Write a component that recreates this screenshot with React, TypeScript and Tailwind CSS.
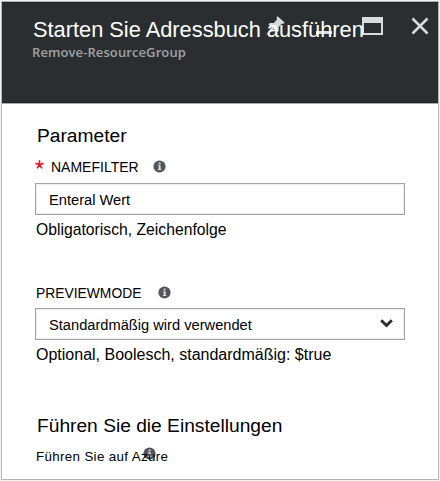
import type { ReactNode } from "react";

function InfoIcon({ className = "" }: { className?: string }) {
  return (
    <svg className={`block h-[13px] w-[13px] shrink-0 ${className}`} viewBox="0 0 13 13">
      <circle cx="6.5" cy="6.5" r="6.1" fill="#53575b" />
      <rect x="5.7" y="2.6" width="1.9" height="1.7" fill="#e0e0e0" />
      <path d="M4.9 5.2h2.7v3.9h.7v.9H4.9v-.9h.8v-3h-.8z" fill="#e0e0e0" />
    </svg>
  );
}

function Field({ children, arrow = false }: { children: ReactNode; arrow?: boolean }) {
  return (
    <div className="flex h-8 w-[370px] items-center justify-between border border-[#a3a3a3] pt-[2px] pr-[11px] pl-[13px] text-[14.67px] leading-5 shadow-[inset_0_0_0_1px_#eeeeee]">
      <span>{children}</span>
      {arrow && (
        <svg className="-mt-[3px] block h-[9px] w-[13px]" viewBox="0 0 13 9">
          <path d="M1.2 1.3 6.5 6.5l5.3-5.2" fill="none" stroke="#252b33" strokeWidth="2.9" />
        </svg>
      )}
    </div>
  );
}

function WindowControls() {
  return (
    <div className="absolute top-[14px] right-[8px] flex h-[21px] items-start">
      <svg className="-mt-px block h-[20px] w-[20px]" viewBox="0 0 20 20" fill="#dadbdc">
        <path d="m12.5.3 7.2 6.2-1.5 1.3h-1.6L13.7 11v4L12 16.3 8.6 13.2 1 19.5l5.6-8.4-3.2-2.6 1.4-1.4h4.1l3-3.6-.3-2z" />
      </svg>
      <div className="mt-[14px] ml-[31px] h-[3px] w-[16px] bg-[#dadbdc]" />
      <div className="ml-[30px] h-[18px] w-[21px] border-[2px] border-t-[6px] border-[#dadbdc]" />
      <svg className="ml-[28px] mr-px block h-[18px] w-[18px]" viewBox="0 0 18 18">
        <path d="m1.5 1.5 15 15M16.5 1.5l-15 15" stroke="#dadbdc" strokeWidth="2.5" />
      </svg>
    </div>
  );
}

export default function App() {
  return (
    <div className="h-[481px] w-[440px] bg-[#f2f2f2] p-px font-['Liberation_Sans',Arial,sans-serif] text-black">
      <main className="flex h-[479px] w-[438px] flex-col border border-[#b5b5b5] bg-white">
        <header className="relative h-[101px] shrink-0 border-y border-t-[#1c2226] border-b-[#1c2226] bg-[#2a2e31] pt-[15px] pl-[31px] shadow-[0_1px_0_#aaaaaa]">
          <WindowControls />
          <h1 className="relative h-6 text-[21.8px] leading-6 whitespace-nowrap text-white">
            Starten Sie Adressbuch ausführen
          </h1>
          <p className="-ml-px h-5 font-['Open_Sans','Noto_Sans',sans-serif] text-[13px] leading-5 font-semibold tracking-[0.1px] whitespace-nowrap text-[#a0a3a5]">
            Remove-ResourceGroup
          </p>
        </header>
        <section className="pl-[33px]">
          <h2 className="mt-[21px] ml-[2px] h-6 text-[19.2px] leading-6">Parameter</h2>
          <div className="mt-[9px] flex h-5 items-center text-[14px] leading-5">
            <svg className="-mt-[6px] block h-[9px] w-[9px]" viewBox="0 0 9 9">
              <path d="M4.5 4.8V.2M4.5 4.8.5 3.2M4.5 4.8l4-1.6M4.5 4.8 2 8.4M4.5 4.8 7 8.4" stroke="#e81123" strokeWidth="1.6" />
            </svg>
            <span className="ml-[7px] w-[102px]">NAMEFILTER</span>
            <InfoIcon className="-mt-px" />
          </div>
          <div className="mt-[6px]">
            <Field>Enteral Wert</Field>
          </div>
          <p className="mt-[5px] ml-px h-5 text-[15.72px] leading-5">Obligatorisch, Zeichenfolge</p>
          <div className="mt-[43px] ml-px flex h-5 items-center text-[13.85px] leading-5">
            <span className="w-[122px]">PREVIEWMODE</span>
            <InfoIcon className="-mt-[2px]" />
          </div>
          <div className="mt-[5px]">
            <Field arrow>Standardmäßig wird verwendet</Field>
          </div>
          <p className="mt-[5px] ml-px h-5 text-[16px] leading-5">
            Optional, Boolesch, standardmäßig: $true
          </p>
          <h2 className="mt-[49px] ml-[2px] h-6 text-[19.2px] leading-6">Führen Sie die Einstellungen</h2>
          <div className="relative mt-[9px] ml-px h-5 text-[13.33px] leading-5 tracking-[0.35px]">
            <InfoIcon className="absolute top-0 left-[107px]" />
            <span className="relative">Führen Sie auf Azure</span>
          </div>
        </section>
      </main>
    </div>
  );
}
